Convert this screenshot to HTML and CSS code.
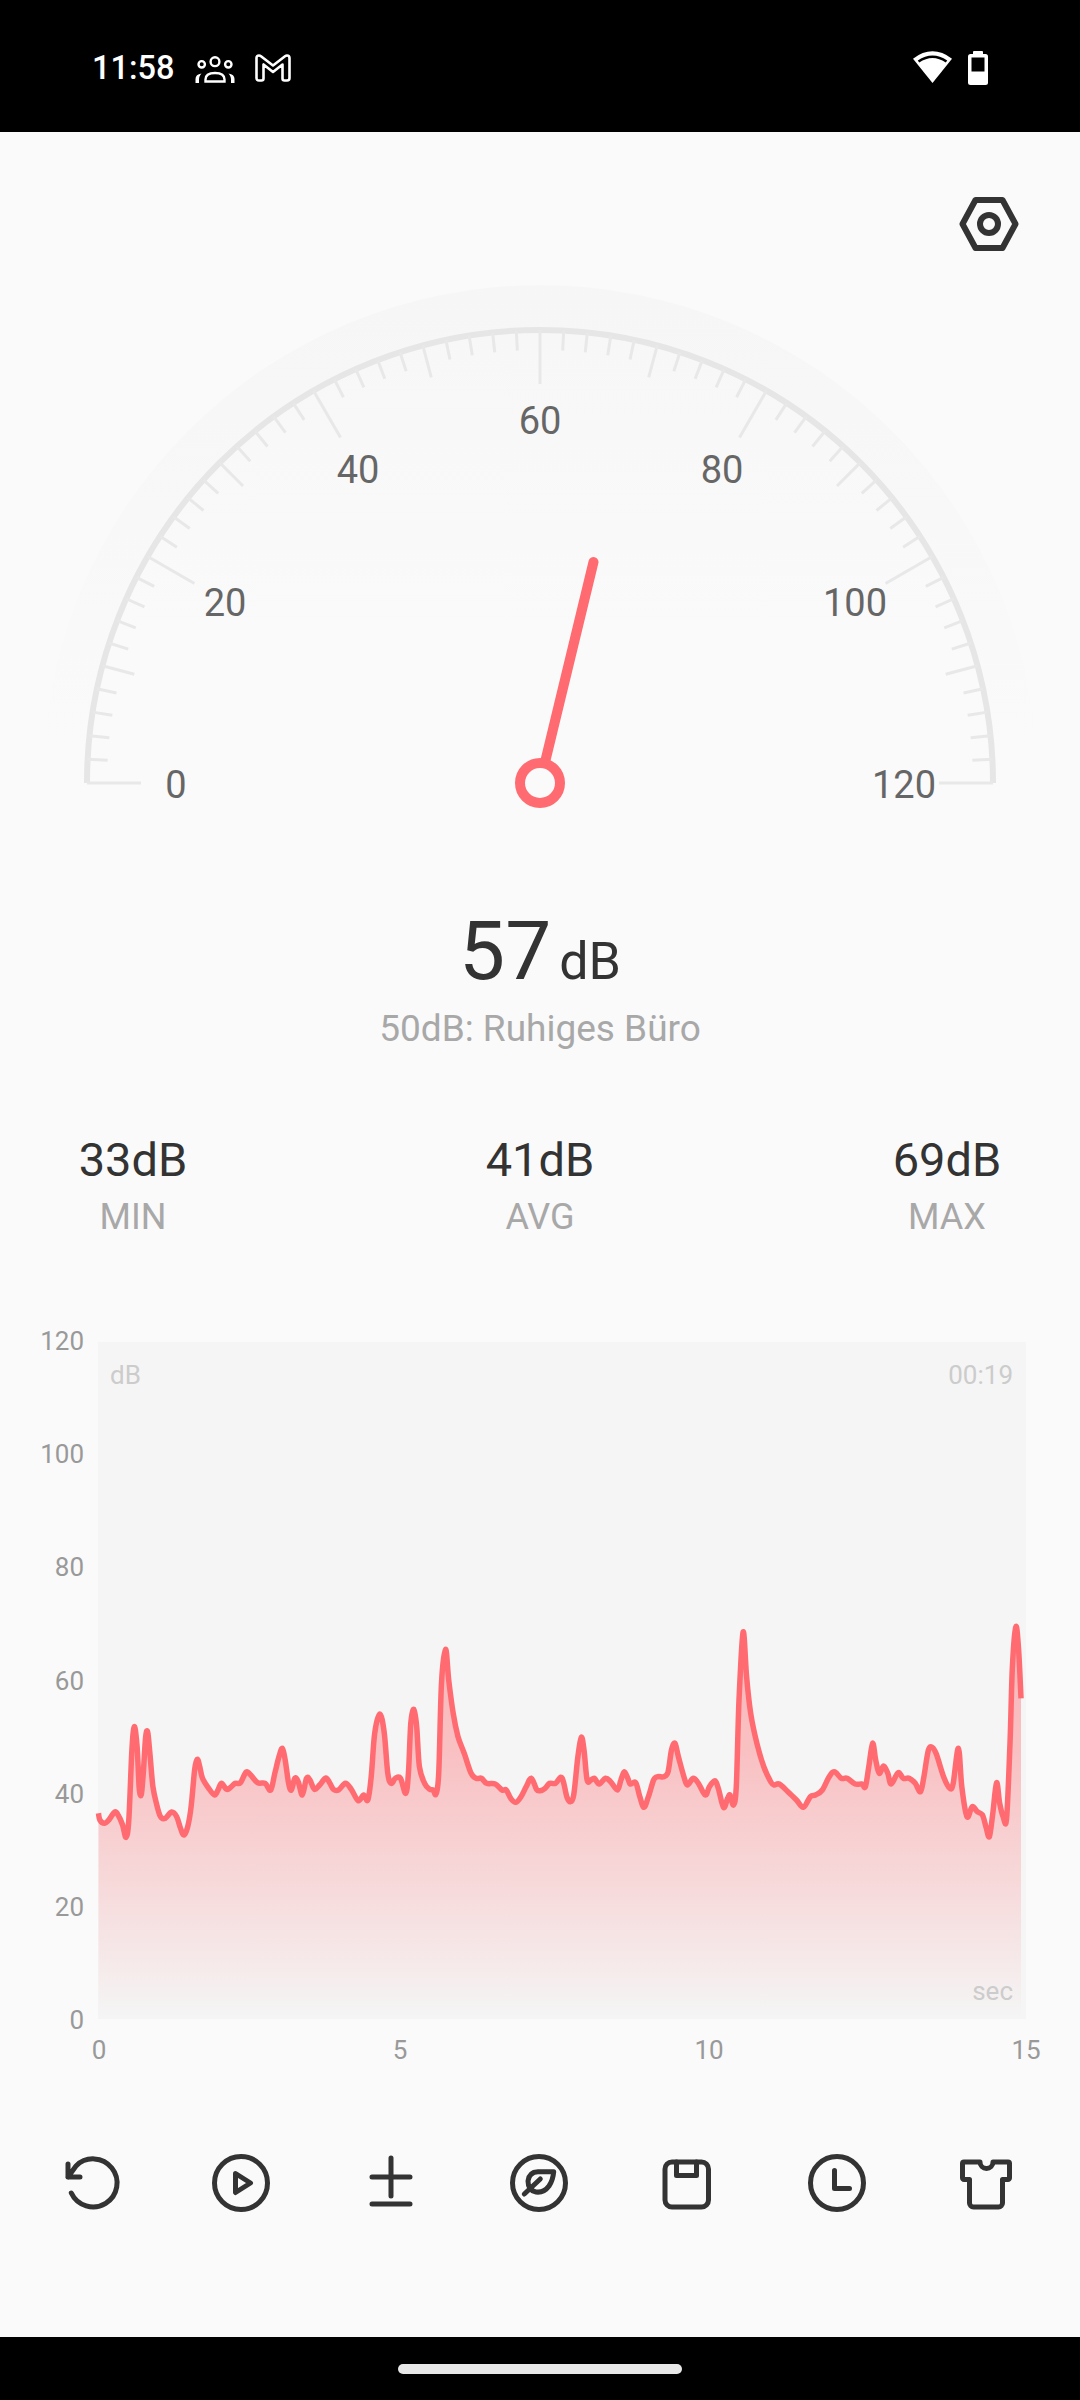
FILE: index.html
```html
<!DOCTYPE html>
<html lang="de">

<head>
    <meta charset="UTF-8">
    <meta name="viewport" content="width=device-width, initial-scale=1.0">
    <title>Schallpegelmesser</title>
    <link rel="stylesheet" href="styles.css">
</head>

<body>
    <header class="status-bar">
        <div class="status-left">
            <span class="status-time">11:58</span>
            <svg class="status-people" viewBox="0 0 40 32">
                <g fill="none" stroke="#fff" stroke-width="2.4">
                    <circle cx="6.7" cy="12.3" r="3.2" />
                    <circle cx="20" cy="9.7" r="4.4" />
                    <circle cx="33.3" cy="12.3" r="3.2" />
                    <path d="M10.5 29.5V27.5Q10.5 21 20 21Q29.5 21 29.5 27.5V29.5Z" />
                </g>
                <path fill="#fff" d="M0.5 31V27c0-3 2-5 6-5.5-1.5 1.5-2.5 3.5-2.5 6V31zM39.5 31V27c0-3-2-5-6-5.5 1.5 1.5 2.5 3.5 2.5 6V31z" />
            </svg>
            <svg class="status-mail" viewBox="0 0 36 28">
                <path fill="none" stroke="#fff" stroke-width="2.6" stroke-linejoin="round"
                    d="M1.5 4Q1.5 1.5 4 1.5Q5 1.5 6 2.3L18 11.5L30 2.3Q31 1.5 32 1.5Q34.5 1.5 34.5 4V24Q34.5 26.5 32 26.5H29.5Q27.5 26.5 27.5 24.5V10.5L18 18L8.5 10.5V24.5Q8.5 26.5 6.5 26.5H4Q1.5 26.5 1.5 24Z" />
            </svg>
        </div>
        <div class="status-right">
            <svg class="status-wifi" viewBox="0 0 39 33">
                <path fill="#fff" d="M0 7.7Q19.5 -7 39 7.7L19.5 32Z" />
                <path fill="none" stroke="#000" stroke-width="2.6" d="M5.5 10.5Q19.5 1 33.5 10.5" />
            </svg>
            <svg class="status-battery" viewBox="0 0 20 34">
                <rect x="5" width="10" height="5" rx="1" fill="#fff" />
                <rect y="3" width="20" height="31" rx="2.5" fill="#fff" />
                <rect x="3.5" y="6.5" width="13" height="14" fill="#000" />
            </svg>
        </div>
    </header>

    <main class="meter">
        <div class="settings-row">
            <svg class="settings-icon" viewBox="0 0 60 54">
                <path class="icon-line" d="M16.5 3H43.5L56.5 27L43.5 51H16.5L3.5 27Z" />
                <circle class="icon-line" cx="30" cy="27" r="9" />
            </svg>
        </div>

        <svg class="gauge" viewBox="0 251 1080 569">
            <defs>
                <linearGradient id="halo-fade" gradientUnits="userSpaceOnUse" x1="0" y1="285" x2="0" y2="750">
                    <stop offset="0" stop-color="#f6f6f6" />
                    <stop offset="1" stop-color="#fafafa" />
                </linearGradient>
                <linearGradient id="dial-fade" gradientUnits="userSpaceOnUse" x1="0" y1="330" x2="0" y2="640">
                    <stop offset="0" stop-color="#f7f7f7" />
                    <stop offset="1" stop-color="#fafafa" />
                </linearGradient>
            </defs>
            <path fill="url(#halo-fade)" d="M42 783A498 498 0 0 1 1038 783Z" />
            <path fill="url(#dial-fade)" d="M87 783A453 453 0 0 1 993 783Z" />
            <path class="gauge-arc" d="M87 783A453 453 0 0 1 993 783" />
            <g id="gauge-ticks"></g>
            <text class="gauge-label" x="176" y="798">0</text>
            <text class="gauge-label" x="225" y="616">20</text>
            <text class="gauge-label" x="358" y="483">40</text>
            <text class="gauge-label" x="540" y="434">60</text>
            <text class="gauge-label" x="722" y="483">80</text>
            <text class="gauge-label" x="855" y="616">100</text>
            <text class="gauge-label" x="904" y="798">120</text>
            <line class="gauge-needle" x1="540" y1="783" x2="593.5" y2="562" />
            <circle class="gauge-hub" cx="540" cy="783" r="20" />
        </svg>

        <div class="readout">
            <span class="readout-value">57</span>
            <span class="readout-unit">dB</span>
        </div>
        <p class="readout-hint">50dB: Ruhiges Büro</p>

        <div class="stats">
            <div class="stat">
                <div class="stat-value">33dB</div>
                <div class="stat-label">MIN</div>
            </div>
            <div class="stat">
                <div class="stat-value">41dB</div>
                <div class="stat-label">AVG</div>
            </div>
            <div class="stat">
                <div class="stat-value">69dB</div>
                <div class="stat-label">MAX</div>
            </div>
        </div>

        <svg class="chart" viewBox="0 1320 1080 750">
            <defs>
                <linearGradient id="area-fade" gradientUnits="userSpaceOnUse" x1="0" y1="1640" x2="0" y2="2018">
                    <stop offset="0" stop-color="#ff6b70" stop-opacity="0.45" />
                    <stop offset="0.3" stop-color="#ff6b70" stop-opacity="0.38" />
                    <stop offset="0.65" stop-color="#ff6b70" stop-opacity="0.2" />
                    <stop offset="1" stop-color="#ff6b70" stop-opacity="0" />
                </linearGradient>
            </defs>
            <rect class="chart-plot" x="98" y="1342" width="928" height="677" />
            <path id="chart-area" fill="url(#area-fade)" />
            <path id="chart-line" class="chart-line" />

            <text class="chart-y" x="84" y="1350">120</text>
            <text class="chart-y" x="84" y="1463">100</text>
            <text class="chart-y" x="84" y="1576">80</text>
            <text class="chart-y" x="84" y="1690">60</text>
            <text class="chart-y" x="84" y="1803">40</text>
            <text class="chart-y" x="84" y="1916">20</text>
            <text class="chart-y" x="84" y="2029">0</text>

            <text class="chart-x" x="99" y="2059">0</text>
            <text class="chart-x" x="400" y="2059">5</text>
            <text class="chart-x" x="709" y="2059">10</text>
            <text class="chart-x" x="1026" y="2059">15</text>

            <text class="chart-note" x="110" y="1384">dB</text>
            <text class="chart-note chart-note-end" x="1013" y="1384">00:19</text>
            <text class="chart-note chart-note-end" x="1013" y="2000">sec</text>
        </svg>

        <nav class="toolbar">
            <svg class="tool" viewBox="0 0 60 60">
                <path class="icon-line" d="M8.3 40A24 24 0 1 0 13 13L5 24M5 11V24H17" />
            </svg>
            <svg class="tool" viewBox="1 0 60 60">
                <circle class="icon-line" cx="30" cy="30" r="26.5" />
                <path class="icon-line" d="M24.5 20.5L39.5 30L24.5 39.5Z" />
            </svg>
            <svg class="tool" viewBox="0 0 60 60">
                <path class="icon-line" d="M30 5V43M11 24H49M11 51H49" />
            </svg>
            <svg class="tool" viewBox="0 0 60 60">
                <circle class="icon-line" cx="30" cy="30" r="26.5" />
                <path class="icon-line" d="M44.7 18.7Q44 27 40 33Q35 40 27 39Q19 37.5 19 28Q20 19 29 18.7ZM15.3 41L31.3 26" />
            </svg>
            <svg class="tool" viewBox="1 0 60 60">
                <rect class="icon-line" x="8" y="9" width="43.5" height="45" rx="7" />
                <path class="icon-line" d="M19.5 9V22.5H39.5V9" />
            </svg>
            <svg class="tool" viewBox="0 0 60 60">
                <circle class="icon-line" cx="30" cy="30" r="26.5" />
                <path class="icon-line" d="M27.5 17.5V35.5H42.5" />
            </svg>
            <svg class="tool" viewBox="0 0 60 60">
                <path class="icon-line" d="M8 9H24a6.5 6.5 0 0 0 13 0H52a1.5 1.5 0 0 1 1.5 1.5V25a1.5 1.5 0 0 1-1.5 1.5H46.5V50a4 4 0 0 1-4 4H17.5a4 4 0 0 1-4-4V26.5H8A1.5 1.5 0 0 1 6.5 25V10.5A1.5 1.5 0 0 1 8 9Z" />
            </svg>
        </nav>
    </main>

    <footer class="nav-bar">
        <div class="nav-pill"></div>
    </footer>

    <script src="main.js"></script>
</body>

</html>
```

FILE: styles.css
```css
* {
    box-sizing: border-box;
}

body {
    margin: 0;
    width: 1080px;
    height: 2400px;
    display: flex;
    flex-direction: column;
    overflow: hidden;
    background: #fafafa;
    font-family: Roboto, "Noto Sans", sans-serif;
}

/* Status bar */
.status-bar {
    flex: 0 0 132px;
    display: flex;
    justify-content: space-between;
    align-items: center;
    padding: 3px 92px 0 92px;
    background: #000;
    color: #fff;
}

.status-left,
.status-right {
    display: flex;
    align-items: center;
}

.status-time {
    font-size: 32.5px;
    font-weight: 500;
    margin-right: 21px;
}

.status-people {
    width: 40px;
    height: 32px;
    margin-right: 20px;
}

.status-mail {
    width: 36px;
    height: 28px;
}

.status-wifi {
    width: 39px;
    height: 33px;
    margin-right: 16px;
}

.status-battery {
    width: 20px;
    height: 34px;
}

/* Main screen */
.meter {
    flex: 1;
    display: flex;
    flex-direction: column;
}

.settings-row {
    display: flex;
    justify-content: flex-end;
    padding: 65px 61px 0 0;
}

.settings-icon {
    display: block;
    width: 60px;
    height: 54px;
}

.icon-line {
    fill: none;
    stroke: #333;
    stroke-width: 5px;
    stroke-linecap: round;
    stroke-linejoin: round;
}

.settings-icon .icon-line {
    stroke-width: 6px;
}

/* Gauge */
.gauge {
    display: block;
    width: 1080px;
    height: 569px;
}

.gauge-arc {
    fill: none;
    stroke: #e6e6e6;
    stroke-width: 6px;
}

.gauge-tick {
    stroke: #e8e8e8;
    stroke-width: 3px;
}

.gauge-label {
    font-size: 38px;
    fill: #666;
    text-anchor: middle;
}

.gauge-needle {
    stroke: #ff6b70;
    stroke-width: 10px;
    stroke-linecap: round;
}

.gauge-hub {
    fill: #fafafa;
    stroke: #ff6b70;
    stroke-width: 10px;
}

/* Current value */
.readout {
    display: flex;
    justify-content: center;
    align-items: baseline;
    gap: 8px;
    margin-top: 81px;
    height: 100px;
    line-height: 100px;
    color: #333;
}

.readout-value {
    font-size: 82px;
}

.readout-unit {
    font-size: 52px;
}

.readout-hint {
    margin: 6px 0 0;
    line-height: 44px;
    font-size: 37px;
    color: #a8a8a8;
    text-align: center;
}

/* Min / avg / max */
.stats {
    display: flex;
    justify-content: space-between;
    margin-top: 81px;
    padding: 0 33px;
}

.stat {
    width: 200px;
    text-align: center;
}

.stat-value {
    line-height: 56px;
    font-size: 47px;
    color: #333;
}

.stat-label {
    margin-top: 7px;
    line-height: 44px;
    font-size: 36px;
    color: #a8a8a8;
}

/* Chart */
.chart {
    display: block;
    width: 1080px;
    height: 750px;
    margin-top: 81px;
}

.chart-plot {
    fill: #f5f5f5;
}

.chart-line {
    fill: none;
    stroke: #ff6b70;
    stroke-width: 5.5px;
    stroke-linejoin: round;
}

.chart-y,
.chart-x {
    font-size: 26px;
    fill: #999;
}

.chart-y {
    text-anchor: end;
}

.chart-x {
    text-anchor: middle;
}

.chart-note {
    font-size: 26px;
    fill: #ccc;
}

.chart-note-end {
    text-anchor: end;
}

/* Bottom tools */
.toolbar {
    display: flex;
    justify-content: space-between;
    margin-top: 83px;
    padding: 0 64px 0 63px;
}

.tool {
    display: block;
    width: 60px;
    height: 60px;
}

/* Gesture bar */
.nav-bar {
    flex: 0 0 63px;
    display: flex;
    justify-content: center;
    padding-top: 27px;
    background: #000;
}

.nav-pill {
    width: 284px;
    height: 10px;
    border-radius: 5px;
    background: #e8e8e8;
}
```

FILE: main.js
```js
// gauge ticks: one every 2 dB, 1.5 degrees per dB
const CX = 540;
const CY = 783;
const R = 453;
const ticks = document.getElementById('gauge-ticks');

for (let db = 0; db <= 120; db += 2) {
    const a = (db * 1.5 * Math.PI) / 180;
    const len = db % 20 === 0 ? 54 : db % 10 === 0 ? 33 : 20;
    const line = document.createElementNS('http://www.w3.org/2000/svg', 'line');
    line.setAttribute('class', 'gauge-tick');
    line.setAttribute('x1', CX - R * Math.cos(a));
    line.setAttribute('y1', CY - R * Math.sin(a));
    line.setAttribute('x2', CX - (R - len) * Math.cos(a));
    line.setAttribute('y2', CY - (R - len) * Math.sin(a));
    ticks.appendChild(line);
}

// chart samples, traced: x is (px - 20) * 2.904, y is (px - 1600) * 3
const first = [
    [228, 640], [232, 660], [245, 670], [258, 660], [275, 636], [285, 645], [298, 675], [308, 712],
    [316, 660], [325, 450], [332, 380], [340, 440], [346, 560], [352, 585], [358, 520], [365, 410],
    [371, 398], [378, 470], [386, 560], [396, 610], [408, 650], [422, 655], [440, 636], [455, 650],
    [466, 685], [476, 705], [487, 680], [497, 620], [507, 510], [515, 478], [522, 500], [530, 535],
    [548, 565], [565, 585], [575, 570], [585, 550], [600, 568], [612, 562], [625, 550], [640, 548],
    [657, 516], [670, 525], [690, 548], [712, 550], [728, 570], [740, 520], [752, 470], [762, 445],
    [770, 480], [780, 550], [788, 570], [798, 535], [808, 545], [820, 585], [832, 535], [842, 540],
    [855, 568], [870, 555], [888, 534], [900, 550], [910, 568], [925, 570], [945, 550], [962, 568],
    [982, 602], [998, 585], [1010, 600], [1020, 530], [1030, 400], [1045, 342], [1058, 400], [1068, 520],
    [1078, 550], [1090, 535], [1105, 535], [1120, 580], [1128, 520], [1135, 370], [1144, 328], [1152, 380],
    [1160, 500], [1175, 550], [1190, 568], [1200, 570], [1208, 582], [1216, 520], [1224, 250], [1236, 148],
    [1245, 240], [1258, 340], [1272, 410], [1290, 460], [1310, 520], [1325, 535], [1340, 535], [1355, 550],
    [1380, 552], [1400, 570], [1412, 570], [1425, 595], [1440, 607], [1455, 590], [1470, 560], [1485, 535],
    [1500, 568]
];

// second half, same trace shifted by 1510 in x
const second = [
    [0, 572], [15, 565], [28, 550], [45, 550], [60, 532], [68, 545], [78, 590], [88, 605],
    [98, 585], [110, 470], [120, 412], [128, 450], [137, 540], [148, 540], [158, 535], [172, 552],
    [190, 535], [205, 545], [225, 570], [235, 540], [245, 515], [255, 535], [262, 552], [278, 548],
    [290, 590], [302, 622], [315, 590], [330, 540], [342, 530], [360, 530], [372, 515], [382, 450],
    [392, 430], [402, 470], [418, 530], [428, 555], [445, 535], [460, 550], [480, 585], [492, 560],
    [508, 542], [518, 565], [533, 622], [545, 595], [552, 585], [562, 615], [570, 560], [578, 300],
    [590, 96], [600, 230], [612, 340], [630, 430], [650, 500], [670, 545], [680, 555], [695, 552],
    [720, 575], [745, 600], [765, 622], [785, 590], [800, 585], [820, 570], [840, 530], [855, 515],
    [875, 535], [892, 535], [915, 552], [935, 552], [945, 560], [955, 500], [966, 430], [975, 480],
    [985, 520], [998, 498], [1010, 520], [1020, 552], [1040, 518], [1055, 535], [1072, 535], [1090, 550],
    [1105, 575], [1115, 530], [1128, 450], [1140, 443], [1152, 465], [1172, 530], [1190, 565], [1200, 550],
    [1215, 445], [1225, 560], [1240, 650], [1255, 620], [1270, 635], [1285, 645], [1295, 680], [1305, 710],
    [1315, 640], [1326, 548], [1335, 610], [1345, 650], [1355, 655], [1365, 430], [1372, 200], [1382, 80],
    [1390, 150], [1397, 295]
];

const points = first.concat(second.map(([x, y]) => [x + 1510, y]))
    .map(([x, y]) => [20 + x / 2.904, 1600 + y / 3]);

// catmull-rom through the samples so the peaks stay rounded
let d = `M${points[0][0].toFixed(1)} ${points[0][1].toFixed(1)}`;
for (let i = 0; i < points.length - 1; i++) {
    const p0 = points[Math.max(i - 1, 0)];
    const p1 = points[i];
    const p2 = points[i + 1];
    const p3 = points[Math.min(i + 2, points.length - 1)];
    const c1x = p1[0] + (p2[0] - p0[0]) / 6;
    const c1y = p1[1] + (p2[1] - p0[1]) / 6;
    const c2x = p2[0] - (p3[0] - p1[0]) / 6;
    const c2y = p2[1] - (p3[1] - p1[1]) / 6;
    d += `C${c1x.toFixed(1)} ${c1y.toFixed(1)} ${c2x.toFixed(1)} ${c2y.toFixed(1)} ${p2[0].toFixed(1)} ${p2[1].toFixed(1)}`;
}

const startX = points[0][0].toFixed(1);
const endX = points[points.length - 1][0].toFixed(1);
document.getElementById('chart-line').setAttribute('d', d);
document.getElementById('chart-area').setAttribute('d', `${d}L${endX} 2018L${startX} 2018Z`);
```
